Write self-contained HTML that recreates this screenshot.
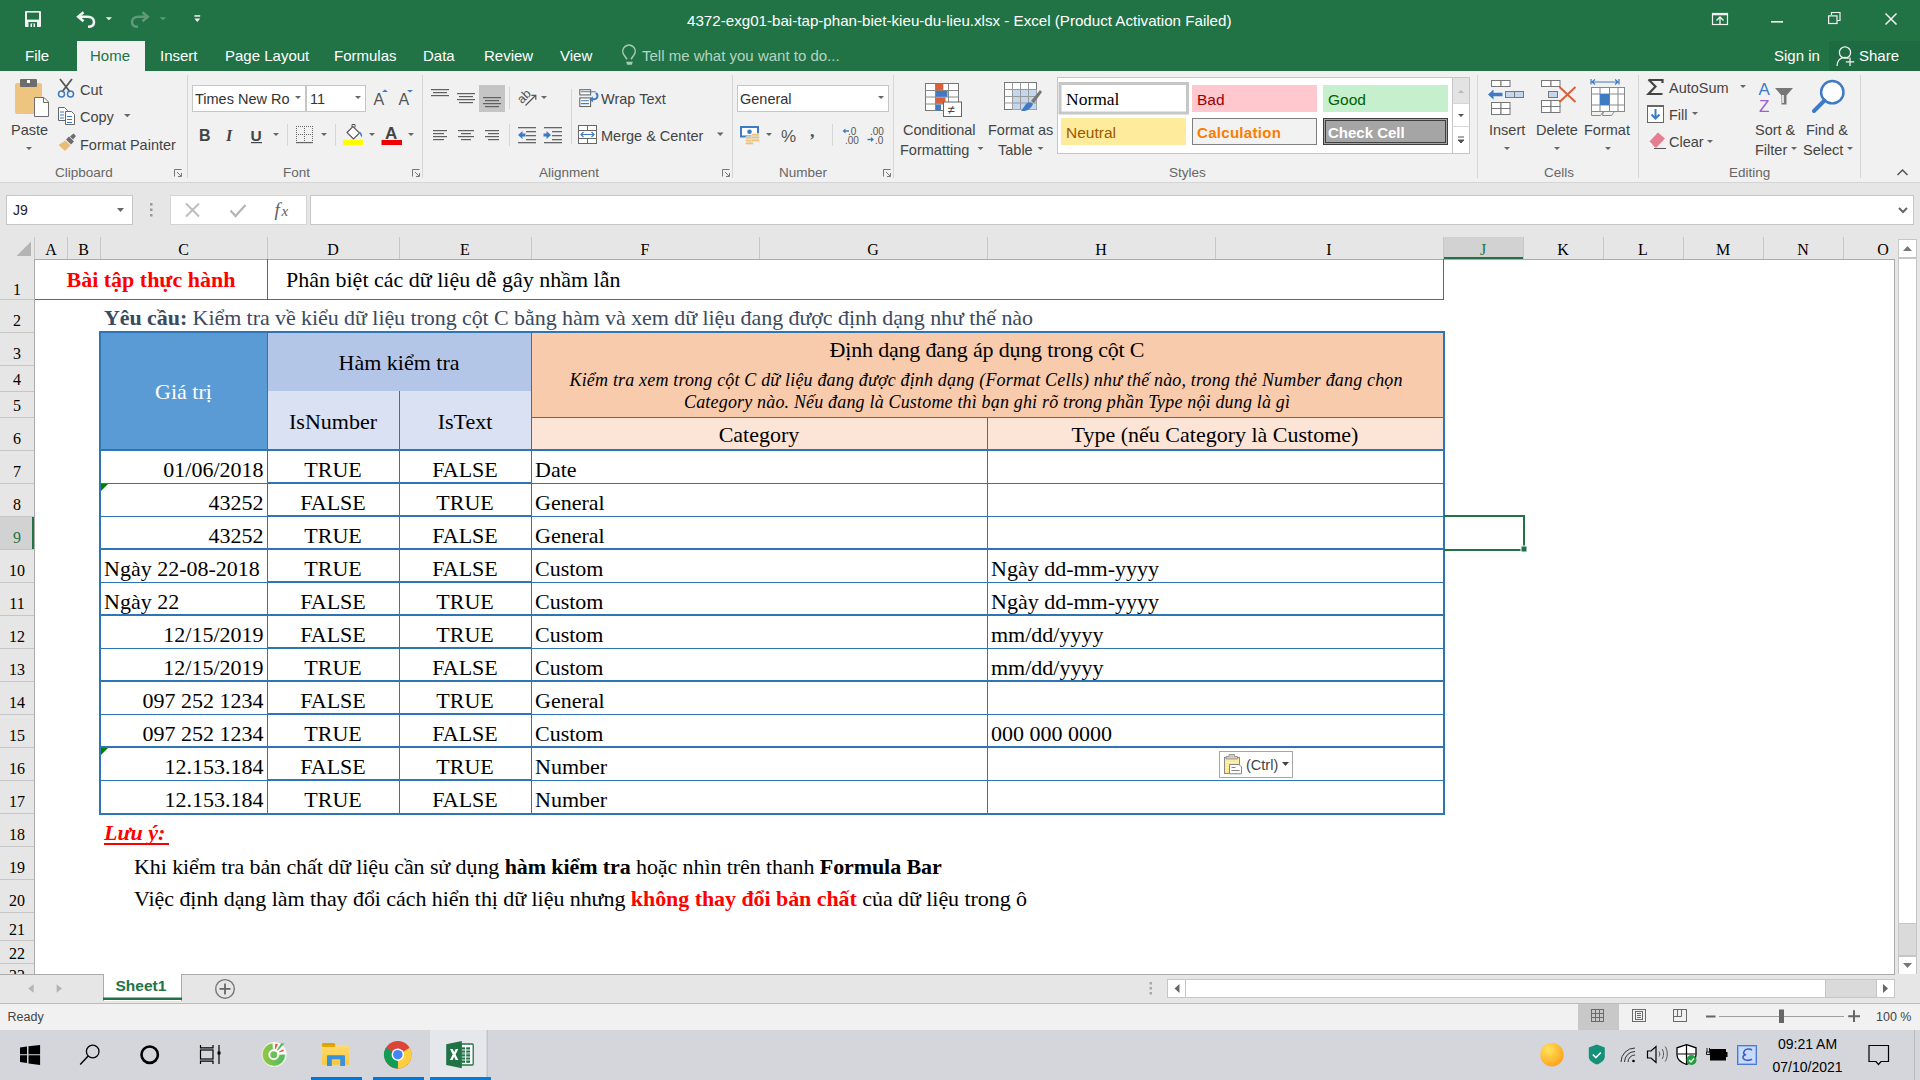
<!DOCTYPE html>
<html><head><meta charset="utf-8">
<style>
*{margin:0;padding:0;box-sizing:border-box}
html,body{width:1920px;height:1080px;overflow:hidden}
body{position:relative;background:#fff;font-family:"Liberation Sans",sans-serif;color:#000}
.a{position:absolute}
.t{position:absolute;white-space:nowrap}
.ui{font-family:"Liberation Sans",sans-serif;font-size:15px;color:#444}
.sf{font-family:"Liberation Serif",serif}
/* title */
#title{left:0;top:0;width:1920px;height:71px;background:#217346}
.tab{position:absolute;top:47px;font-size:15px;color:#fff;white-space:nowrap}
#ribbon{left:0;top:71px;width:1920px;height:112px;background:#F1F1F1;border-bottom:1px solid #D5D5D5}
.sep{position:absolute;width:1px;background:#D6D6D6}
.rl{font-size:14.5px;color:#444;margin-top:1px}
.gl{font-size:15.5px}
.glabel{position:absolute;top:164.5px;font-size:13.5px;color:#666;white-space:nowrap}
#fbar{left:0;top:183px;width:1920px;height:54px;background:#E6E6E6}
#colh{left:0;top:237px;width:1895px;height:22px;background:#E6E6E6;border-bottom:1px solid #ABABAB}
.ch{position:absolute;top:237px;height:22px;border-left:1px solid #C6C6C6;font-family:"Liberation Serif",serif;font-size:18px;text-align:center;line-height:24px;color:#000}
.rh{position:absolute;left:0;width:34px;background:#E6E6E6;border-bottom:1px solid #C6C6C6;font-family:"Liberation Serif",serif;font-size:18px;text-align:center;color:#000}
.cell{position:absolute;font-family:"Liberation Serif",serif;font-size:22px;white-space:nowrap;color:#000}
</style></head><body>

<!-- ============ TITLE BAR ============ -->
<div class="a" id="title"></div>
<div class="a" style="left:77px;top:41px;width:68px;height:30px;background:#F1F1F1"></div>
<div class="a" style="left:1829px;top:41px;width:91px;height:30px;background:#1E6B41"></div>

<svg class="a" style="left:0;top:0" width="1920" height="71" viewBox="0 0 1920 71">
<!-- save -->
<rect x="25" y="11" width="16" height="16" rx="1" fill="#F3F3F3"/>
<rect x="27" y="12.6" width="12" height="7" fill="#217346"/>
<rect x="28.5" y="22" width="8.5" height="5" fill="#217346"/>
<rect x="30.5" y="23.5" width="4.5" height="3.5" fill="#F3F3F3"/>
<rect x="32" y="23.5" width="1.5" height="3.5" fill="#217346"/>
<!-- undo -->
<path d="M79.5 16.7H87.5C91.8 16.7 94 19.2 94 22C94 24.8 92 26.8 88 26.8" fill="none" stroke="#F3F3F3" stroke-width="2.6"/>
<path d="M83.5 12.2L78.2 16.7L83.5 21.3" fill="none" stroke="#F3F3F3" stroke-width="2.6"/>
<path d="M105.8 17.3h6.2l-3.1 3z" fill="#F3F3F3"/>
<!-- redo faded -->
<path d="M146.5 16.7H138.5C134.2 16.7 132 19.2 132 22C132 24.8 134 26.8 138 26.8" fill="none" stroke="#5E9A77" stroke-width="2.6"/>
<path d="M142.5 12.2L147.8 16.7L142.5 21.3" fill="none" stroke="#5E9A77" stroke-width="2.6"/>
<path d="M159.8 17.3h6.2l-3.1 3z" fill="#5E9A77"/>
<!-- customize -->
<rect x="194.4" y="15.2" width="5.8" height="1.5" fill="#F3F3F3"/>
<path d="M194.4 18.5h5.8l-2.9 3.5z" fill="#F3F3F3"/>
<!-- lightbulb -->
<path d="M627 59.3l-3.2-4.6a6.2 6.2 0 1 1 10.4 0l-3.2 4.6" fill="none" stroke="#A8CBB5" stroke-width="1.5"/>
<path d="M626.2 61.8h6.6l-.9 3h-4.8z" fill="#A8CBB5"/>
<!-- ribbon display options -->
<rect x="1712.5" y="13.5" width="15" height="11" fill="none" stroke="#F3F3F3" stroke-width="1.2"/>
<rect x="1712.5" y="13.5" width="15" height="1.8" fill="#F3F3F3"/>
<path d="M1720 17v7.5M1716.5 20.5l3.5-3.5l3.5 3.5" fill="none" stroke="#F3F3F3" stroke-width="1.3"/>
<!-- minimize -->
<rect x="1771" y="21" width="12" height="1.6" fill="#F3F3F3"/>
<!-- restore -->
<path d="M1831.5 15v-2.5h8.5v8h-2.8" fill="none" stroke="#F3F3F3" stroke-width="1.2"/>
<rect x="1828.6" y="15.9" width="8.4" height="7.6" fill="none" stroke="#F3F3F3" stroke-width="1.2"/>
<!-- close -->
<path d="M1885.5 13.5l11 11M1896.5 13.5l-11 11" stroke="#F3F3F3" stroke-width="1.5"/>
<!-- share person -->
<circle cx="1845" cy="52.5" r="5.6" fill="none" stroke="#F3F3F3" stroke-width="1.3"/>
<path d="M1837 66c0-5 3-8.5 7.5-8.5c1.5 0 3 .3 4.2 1" fill="none" stroke="#F3F3F3" stroke-width="1.3"/>
<path d="M1850 57.5v8.5M1845.8 61.8h8.4" stroke="#F3F3F3" stroke-width="1.3"/>
</svg>
<div class="t" style="left:687px;top:12px;font-size:15.15px;color:#fff">4372-exg01-bai-tap-phan-biet-kieu-du-lieu.xlsx - Excel (Product Activation Failed)</div>

<div class="tab" style="left:25px">File</div>
<div class="tab" style="left:90px;color:#217346">Home</div>
<div class="tab" style="left:160px">Insert</div>
<div class="tab" style="left:225px">Page Layout</div>
<div class="tab" style="left:334px">Formulas</div>
<div class="tab" style="left:423px">Data</div>
<div class="tab" style="left:484px">Review</div>
<div class="tab" style="left:560px">View</div>
<div class="tab" style="left:642px;color:#B5D3C0">Tell me what you want to do...</div>
<div class="tab" style="left:1774px">Sign in</div>
<div class="tab" style="left:1859px">Share</div>

<!-- ============ RIBBON ============ -->

<div class="a" id="ribbon"></div>
<svg class="a" style="left:0;top:71px" width="1920" height="111" viewBox="0 71 1920 111">
<!-- separators -->
<g fill="#D6D6D6">
<rect x="187" y="75" width="1" height="103"/><rect x="422" y="75" width="1" height="103"/>
<rect x="732" y="75" width="1" height="103"/><rect x="893" y="75" width="1" height="103"/>
<rect x="1477" y="75" width="1" height="103"/><rect x="1638" y="75" width="1" height="103"/>
<rect x="1860" y="75" width="1" height="103"/>
<rect x="287" y="124" width="1" height="22"/><rect x="335" y="124" width="1" height="22"/>
<rect x="509" y="87" width="1" height="22"/><rect x="509" y="124" width="1" height="22"/>
<rect x="571" y="89" width="1" height="55"/><rect x="832" y="124" width="1" height="22"/>
</g>
<!-- dialog launchers -->
<g fill="none" stroke="#777" stroke-width="1">
<path d="M174.5 176.5v-7h7M177 172l4 4M178 176.5h3.5v-3.5"/>
<path d="M412.5 176.5v-7h7M415 172l4 4M416 176.5h3.5v-3.5"/>
<path d="M722.5 176.5v-7h7M725 172l4 4M726 176.5h3.5v-3.5"/>
<path d="M883.5 176.5v-7h7M886 172l4 4M887 176.5h3.5v-3.5"/>
</g>
<!-- dropdown arrows -->
<g fill="#666">
<path d="M26 147h6l-3 3z"/><path d="M124 114h6.5l-3.25 3.25z"/>
<path d="M295 96h6l-3 3z"/><path d="M355 96h6l-3 3z"/>
<path d="M273 133h6l-3 3z"/><path d="M321 133h6l-3 3z"/><path d="M369 133h6l-3 3z"/><path d="M408 133h6l-3 3z"/>
<path d="M541 96h6l-3 3z"/><path d="M717 132.5h6.5l-3.25 3.5z"/>
<path d="M878 96h6l-3 3z"/><path d="M766 133h6l-3 3z"/>
<path d="M977.5 147h6l-3 3z"/><path d="M1037.5 147h6l-3 3z"/>
<path d="M1504 147h6l-3 3z"/><path d="M1554 147h6l-3 3z"/><path d="M1605 147h6l-3 3z"/>
<path d="M1740 85h6l-3 3z"/><path d="M1692 112h6l-3 3z"/><path d="M1707 140h6l-3 3z"/>
<path d="M1791 147h6l-3 3z"/><path d="M1847 147h6l-3 3z"/>
</g>
<!-- Paste -->
<rect x="15" y="83" width="27" height="31" rx="2" fill="#EDC57F"/>
<rect x="20" y="79" width="17" height="8" rx="1" fill="#6D6D6D"/>
<rect x="27" y="80" width="3" height="3" fill="#fff"/>
<path d="M34.5 97.5h9.5l4.5 4.5v14.5h-14z" fill="#fff" stroke="#6D6D6D"/>
<path d="M43.5 97.5v5h5" fill="none" stroke="#6D6D6D"/>
<!-- Cut -->
<path d="M60 79L70 92M72 79L62 92" stroke="#555" stroke-width="1.8"/>
<circle cx="61.5" cy="94" r="3" fill="none" stroke="#3E7BC4" stroke-width="1.5"/>
<circle cx="70.5" cy="94" r="3" fill="none" stroke="#3E7BC4" stroke-width="1.5"/>
<!-- Copy -->
<path d="M58.5 107.5h6l3 3v10h-9z" fill="#fff" stroke="#666"/>
<path d="M65.5 111.5h6l3 3v10h-9z" fill="#fff" stroke="#666"/>
<path d="M60 112h4M60 115h4M60 118h4M67 116.5h5M67 119.5h5M67 122.5h5" stroke="#3E7BC4"/>
<!-- Format painter -->
<path d="M58.5 145l6.5 6l5.5-5.5l-5-5z" fill="#E8BD7A"/>
<path d="M66 139.5l5 5l3-3l-5-5z" fill="#6D6D6D"/>
<path d="M70 136.5l3.5-3l2.5 2.5l-3 3.5z" fill="#6D6D6D"/>
<!-- Font boxes -->
<rect x="192.5" y="85.5" width="113" height="26" fill="#fff" stroke="#C6C6C6"/>
<rect x="306.5" y="85.5" width="59" height="26" fill="#fff" stroke="#C6C6C6"/>
<!-- grow / shrink font -->
<text x="373.5" y="104.5" font-family="Liberation Sans" font-size="16" fill="#555">A</text>
<path d="M382 92h6l-3-2.5z" fill="#3E7BC4"/>
<text x="398.5" y="104.5" font-family="Liberation Sans" font-size="16" fill="#555">A</text>
<path d="M407 90h6l-3 2.5z" fill="#3E7BC4"/>
<!-- B I U -->
<text x="199" y="140.5" font-family="Liberation Sans" font-weight="bold" font-size="16" fill="#444">B</text>
<text x="226" y="140.5" font-family="Liberation Serif" font-style="italic" font-weight="bold" font-size="16" fill="#444">I</text>
<text x="250.5" y="140.5" font-family="Liberation Sans" font-weight="bold" font-size="15.5" fill="#444">U</text>
<rect x="251" y="142" width="11" height="1.2" fill="#444"/>
<!-- borders -->
<path d="M296.5 126v16M304.5 126v16M312.5 126v16M296 126.5h17M296 134.5h17" stroke="#6A6A6A" stroke-dasharray="1 1" fill="none"/>
<rect x="296" y="142" width="17" height="1.2" fill="#666"/>
<!-- fill color -->
<path d="M347 132.5l6-6l6.5 6.5l-6 6z" fill="#fff" stroke="#555" stroke-width="1.1"/>
<path d="M352 127v-2.5h3v3" fill="none" stroke="#555" stroke-width="1"/>
<path d="M359.5 131.5c2 1 3 3 2.5 6l-1.5-2z" fill="#3E7BC4"/>
<rect x="343" y="140" width="20" height="5" fill="#FFFF00"/>
<!-- font color -->
<text x="385" y="138.6" font-family="Liberation Sans" font-weight="bold" font-size="17" fill="#444">A</text>
<rect x="381.5" y="140" width="20.5" height="5" fill="#F00000"/>
<!-- alignment icons -->
<g fill="#606060">
<rect x="431" y="89" width="18" height="1.2"/><rect x="433" y="92" width="14" height="1.2"/><rect x="431" y="95" width="18" height="1.2"/>
<rect x="457" y="93" width="18" height="1.2"/><rect x="459" y="96" width="14" height="1.2"/><rect x="457" y="99" width="18" height="1.2"/><rect x="459" y="102" width="14" height="1.2"/>
</g>
<rect x="479" y="85" width="26" height="27" fill="#C5C5C5"/>
<g fill="#606060">
<rect x="483" y="97" width="18" height="1.2"/><rect x="485" y="100" width="14" height="1.2"/><rect x="483" y="103" width="18" height="1.2"/><rect x="485" y="106" width="14" height="1.2"/>
<rect x="433" y="130" width="14" height="1.2"/><rect x="433" y="133" width="11" height="1.2"/><rect x="433" y="136" width="14" height="1.2"/><rect x="433" y="139" width="11" height="1.2"/>
<rect x="458" y="130" width="16" height="1.2"/><rect x="461" y="133" width="10" height="1.2"/><rect x="458" y="136" width="16" height="1.2"/><rect x="461" y="139" width="10" height="1.2"/>
<rect x="485" y="130" width="14" height="1.2"/><rect x="488" y="133" width="11" height="1.2"/><rect x="485" y="136" width="14" height="1.2"/><rect x="488" y="139" width="11" height="1.2"/>
</g>
<!-- orientation -->
<text x="516.5" y="101" font-family="Liberation Sans" font-size="12.5" fill="#555" transform="rotate(-45 523 96)">ab</text>
<path d="M525.5 105.5L535.5 95.5M531.3 95.3h4.5v4.5" stroke="#555" stroke-width="1.2" fill="none"/>
<!-- indent -->
<g fill="#666">
<rect x="518" y="127" width="18" height="1.3"/><rect x="526" y="131" width="10" height="1.3"/><rect x="526" y="135" width="10" height="1.3"/><rect x="526" y="139" width="10" height="1.3"/><rect x="518" y="142" width="18" height="1.3"/>
<rect x="544" y="127" width="18" height="1.3"/><rect x="552" y="131" width="10" height="1.3"/><rect x="552" y="135" width="10" height="1.3"/><rect x="552" y="139" width="10" height="1.3"/><rect x="544" y="142" width="18" height="1.3"/>
</g>
<path d="M518 135l4.5-4v2.5h3v3h-3v2.5z" fill="#3E7BC4"/>
<path d="M551 135l-4.5-4v2.5h-3v3h3v2.5z" fill="#3E7BC4"/>
<!-- wrap text icon -->
<rect x="579.8" y="89.7" width="10.8" height="5.2" fill="#fff" stroke="#666" stroke-width="1.1"/>
<rect x="579.8" y="97.9" width="10.8" height="8.6" fill="#fff" stroke="#666" stroke-width="1.1"/>
<path d="M581 91.8h14.5M581 100.8h8M581 103.6h8" stroke="#3E7BC4" stroke-width="1.1"/>
<path d="M595.5 93.2c2.8 .3 2.8 5.8 -1.2 6h-2.5" fill="none" stroke="#3E7BC4" stroke-width="2"/>
<path d="M589.3 99.2l3.6-3v6z" fill="#3E7BC4"/>
<!-- merge icon -->
<rect x="578.5" y="125.5" width="18" height="18" fill="#fff" stroke="#666"/>
<path d="M578.5 130.5h18M578.5 138.5h18M587.5 125.5v5M587.5 138.5v5" stroke="#666"/>
<path d="M581 134.5h13M583.5 132l-2.5 2.5l2.5 2.5M591.5 132l2.5 2.5l-2.5 2.5" stroke="#3E7BC4" stroke-width="1.2" fill="none"/>
<!-- Number format box -->
<rect x="737.5" y="85.5" width="151" height="26" fill="#fff" stroke="#C6C6C6"/>
<!-- accounting -->
<rect x="740" y="126" width="19" height="11.5" fill="#3E7BC4"/>
<rect x="742" y="128" width="15" height="7.5" fill="#fff"/>
<circle cx="749.5" cy="131.8" r="2.3" fill="#3E7BC4"/>
<g fill="#EBC27C" stroke="#F1F1F1" stroke-width=".6"><rect x="745.5" y="136.5" width="8" height="2.6" rx="1.2"/><rect x="745.5" y="139.3" width="8" height="2.6" rx="1.2"/><rect x="745.5" y="142.1" width="8" height="2.6" rx="1.2"/>
<rect x="751.5" y="133.5" width="8" height="2.6" rx="1.2"/><rect x="751.5" y="136.3" width="8" height="2.6" rx="1.2"/><rect x="751.5" y="139.1" width="8" height="2.6" rx="1.2"/></g>
<text x="781" y="142" font-family="Liberation Sans" font-size="17" fill="#555">%</text>
<text x="810" y="137" font-family="Liberation Serif" font-weight="bold" font-size="18" fill="#555">,</text>
<!-- increase/decrease decimal -->
<text x="848" y="135" font-family="Liberation Sans" font-size="10" fill="#555">.0</text>
<text x="845" y="143.5" font-family="Liberation Sans" font-size="10" fill="#555">.00</text>
<path d="M842.5 131l3-2.5v1.8h3.5v1.5h-3.5v1.8z" fill="#3E7BC4"/>
<text x="870" y="135" font-family="Liberation Sans" font-size="10" fill="#555">.00</text>
<text x="875" y="143.5" font-family="Liberation Sans" font-size="10" fill="#555">.0</text>
<path d="M874 139.5l-3-2.5v1.8h-3.5v1.5h3.5v1.8z" fill="#3E7BC4"/>
<!-- conditional formatting -->
<rect x="925.5" y="83.5" width="33" height="27" fill="#fff" stroke="#777"/>
<path d="M925.5 90.5h33M925.5 97h33M925.5 104h33M935.5 83.5v27M948.5 83.5v27" stroke="#888" fill="none"/>
<rect x="936" y="84" width="7.3" height="6.3" fill="#D9603B"/><rect x="936" y="91" width="11.5" height="5.8" fill="#3E7BC4"/>
<rect x="936" y="97.5" width="9.5" height="6.3" fill="#D9603B"/><rect x="936" y="104.5" width="5" height="5.8" fill="#3E7BC4"/>
<rect x="943.5" y="102" width="18" height="14.5" fill="#fff" stroke="#666"/>
<text x="947.5" y="114" font-family="Liberation Sans" font-size="13" fill="#444">≠</text>
<!-- format as table -->
<rect x="1004.5" y="82.5" width="32" height="27" fill="#fff" stroke="#777"/>
<rect x="1012" y="89.5" width="24.5" height="20" fill="#C5D7EC"/>
<path d="M1004.5 89.5h32M1004.5 96.5h32M1004.5 103h32M1012.5 82.5v27M1020.5 82.5v27M1028.5 82.5v27" stroke="#999" fill="none"/>
<path d="M1031 101l9-11l2 2l-8 11z" fill="#777"/>
<path d="M1026 104c2-2 5-2 7 0c-1 3-4 6-8 7h-4c2-2 3-5 5-7z" fill="#3E7BC4"/>
<!-- styles gallery -->
<rect x="1057.5" y="77.5" width="412" height="76" fill="#fff" stroke="#C6C6C6"/>
<rect x="1452.5" y="77.5" width="17" height="76" fill="#fff" stroke="#C6C6C6"/>
<rect x="1453" y="78" width="16" height="25" fill="#E3E3E3"/>
<path d="M1452.5 103.5h17M1452.5 126.5h17" stroke="#D6D6D6"/>
<path d="M1458 93h6l-3-3z" fill="#B8B8B8"/>
<path d="M1458 114h6l-3 3z" fill="#555"/>
<path d="M1458 137h6M1458 140h6l-3 3z" stroke="#555" fill="#555" stroke-width="1"/>
<rect x="1060" y="83.5" width="127.5" height="29.5" fill="#fff" stroke="#C6C6C6" stroke-width="3"/>
<rect x="1192" y="85" width="125" height="27" fill="#FFC7CE"/>
<rect x="1323" y="85" width="125" height="27" fill="#C6EFCE"/>
<rect x="1061" y="118" width="125" height="27" fill="#FFEB9C"/>
<rect x="1192.5" y="118.5" width="124" height="26" fill="#F2F2F2" stroke="#7F7F7F"/>
<rect x="1323.5" y="118.5" width="124" height="26" fill="#A5A5A5" stroke="#3F3F3F" stroke-width="1"/>
<rect x="1325.5" y="120.5" width="120" height="22" fill="none" stroke="#3F3F3F" stroke-width="1"/>
<!-- insert cells -->
<g fill="#fff" stroke="#777">
<rect x="1491.5" y="80.5" width="9.5" height="6"/><rect x="1501" y="80.5" width="9" height="6"/>
<rect x="1491.5" y="102.5" width="9.5" height="6"/><rect x="1501" y="102.5" width="9" height="6"/>
<rect x="1491.5" y="108.5" width="9.5" height="6"/><rect x="1501" y="108.5" width="9" height="6"/>
<rect x="1541.5" y="80.5" width="9.5" height="6"/><rect x="1551" y="80.5" width="9" height="6"/>
<rect x="1541.5" y="100.5" width="9.5" height="6"/><rect x="1551" y="100.5" width="9" height="6"/>
<rect x="1541.5" y="106.5" width="9.5" height="6"/><rect x="1551" y="106.5" width="9" height="6"/>
</g>
<g fill="#C5D7EC" stroke="#777">
<rect x="1505.5" y="91.5" width="9" height="6"/><rect x="1514.5" y="91.5" width="9" height="6"/>
<rect x="1548.5" y="91.5" width="9" height="6"/>
</g>
<path d="M1488 94.5l5.5-5v3.2h9v3.6h-9v3.2z" fill="#3E7BC4"/>
<path d="M1559.5 87l16 15M1575.5 87l-16 15" stroke="#D9603B" stroke-width="2"/>
<!-- format cells -->
<path d="M1591 79v5.5M1619 79v5.5M1592 82h26M1595 79.5l-3 2.5l3 2.5M1615 79.5l3 2.5l-3 2.5" stroke="#3E7BC4" stroke-width="1.2" fill="none"/>
<rect x="1591.5" y="87.5" width="33" height="24" fill="#fff" stroke="#888"/>
<path d="M1591.5 94h33M1591.5 105h33M1600 87.5v24M1609.5 87.5v24M1618 87.5v24" stroke="#888" fill="none"/>
<rect x="1600" y="94" width="9.5" height="11" fill="#3E7BC4"/>
<path d="M1591.5 111.5v4h9l3-4M1603.5 111.5l-1 4h9l3-4" stroke="#888" fill="none"/>
<!-- autosum -->
<path d="M1648.5 80h14v3M1662.5 94h-14l7-7.5l-7-7" stroke="#444" stroke-width="2.2" fill="none" stroke-linejoin="miter"/>
<!-- fill -->
<rect x="1647.5" y="105.5" width="16" height="17" fill="#fff" stroke="#666"/>
<rect x="1647" y="105" width="17" height="2" fill="#666"/>
<path d="M1655.5 109v9M1651.5 114.5l4 4l4-4" stroke="#3E7BC4" stroke-width="2" fill="none"/>
<!-- clear -->
<path d="M1649 142l9-9.5l7 6l-9 9.5z" fill="#E57E91"/>
<path d="M1649 142l3 3" stroke="#fff" stroke-width="1.5"/>
<rect x="1654" y="148" width="12" height="1" fill="#555"/>
<!-- sort -->
<text x="1758.5" y="94.7" font-family="Liberation Sans" font-size="17" fill="#3E7BC4">A</text>
<text x="1759" y="112" font-family="Liberation Sans" font-size="17" fill="#9E5FC9">Z</text>
<path d="M1775 88h18l-6.5 7.5v9h-5v-9z" fill="#777"/>
<path d="M1783 95v8" stroke="#fff" stroke-width="1.5"/>
<!-- find -->
<circle cx="1832.3" cy="92.2" r="11.2" fill="#fff" stroke="#3E7BC4" stroke-width="2.4"/>
<path d="M1824.5 100.5l-10.5 10.5" stroke="#3E7BC4" stroke-width="4" stroke-linecap="round"/>
<g fill="#666"><path d="M295 96h6l-3 3z"/><path d="M355 96h6l-3 3z"/><path d="M878 96h6l-3 3z"/></g>
<!-- collapse chevron -->
<path d="M1897.5 175l5-5l5 5" stroke="#555" stroke-width="1.5" fill="none"/>
</svg>
<div class="t rl" style="left:11px;top:121px">Paste</div>
<div class="t rl" style="left:80px;top:81px">Cut</div>
<div class="t rl" style="left:80px;top:108px">Copy</div>
<div class="t rl" style="left:80px;top:136px">Format Painter</div>
<div class="t rl" style="left:195px;top:90px;color:#333">Times New Ro</div>
<div class="t rl" style="left:310px;top:90px;color:#333">11</div>
<div class="t rl" style="left:601px;top:90px">Wrap Text</div>
<div class="t rl" style="left:601px;top:127px">Merge &amp; Center</div>
<div class="t rl" style="left:740px;top:90px;color:#333">General</div>
<div class="t rl" style="left:903px;top:121px">Conditional</div>
<div class="t rl" style="left:900px;top:141px">Formatting</div>
<div class="t rl" style="left:988px;top:121px">Format as</div>
<div class="t rl" style="left:998px;top:141px">Table</div>
<div class="t" style="left:1066px;top:88.5px;font-family:'Liberation Serif',serif;font-size:17.5px;color:#000">Normal</div>
<div class="t gl" style="left:1197px;top:91px;color:#9C0006">Bad</div>
<div class="t gl" style="left:1328px;top:91px;color:#006100">Good</div>
<div class="t gl" style="left:1066px;top:123.5px;color:#9C5700">Neutral</div>
<div class="t gl" style="left:1197px;top:123.5px;color:#FA7D00;font-weight:bold;font-size:15px;letter-spacing:0.3px">Calculation</div>
<div class="t gl" style="left:1328px;top:123.5px;color:#fff;font-weight:bold;font-size:15px">Check Cell</div>
<div class="t rl" style="left:1489px;top:121px">Insert</div>
<div class="t rl" style="left:1536px;top:121px">Delete</div>
<div class="t rl" style="left:1584px;top:121px">Format</div>
<div class="t rl" style="left:1669px;top:79px">AutoSum</div>
<div class="t rl" style="left:1669px;top:106px">Fill</div>
<div class="t rl" style="left:1669px;top:133px">Clear</div>
<div class="t rl" style="left:1755px;top:121px">Sort &amp;</div>
<div class="t rl" style="left:1755px;top:141px">Filter</div>
<div class="t rl" style="left:1806px;top:121px">Find &amp;</div>
<div class="t rl" style="left:1803px;top:141px">Select</div>
<div class="glabel" style="left:55px">Clipboard</div>
<div class="glabel" style="left:283px">Font</div>
<div class="glabel" style="left:539px">Alignment</div>
<div class="glabel" style="left:779px">Number</div>
<div class="glabel" style="left:1169px">Styles</div>
<div class="glabel" style="left:1544px">Cells</div>
<div class="glabel" style="left:1729px">Editing</div>


<!-- ============ FORMULA BAR ============ -->

<div class="a" id="fbar"></div>
<div class="a" style="left:6px;top:195px;width:127px;height:30px;background:#fff;border:1px solid #C6C6C6"></div>
<div class="t" style="left:13px;top:202px;font-size:14px;color:#222">J9</div>
<div class="a" style="left:170px;top:195px;width:137px;height:30px;background:#fff;border:1px solid #D4D4D4"></div>
<div class="a" style="left:310px;top:195px;width:1604px;height:30px;background:#fff;border:1px solid #C6C6C6"></div>
<svg class="a" style="left:0;top:182px" width="1920" height="55" viewBox="0 182 1920 55">
<path d="M117 208h7l-3.5 4z" fill="#666"/>
<rect x="150" y="203" width="2.5" height="2.5" fill="#999"/><rect x="150" y="208.5" width="2.5" height="2.5" fill="#999"/><rect x="150" y="214" width="2.5" height="2.5" fill="#999"/>
<path d="M186 203.5l13 13M199 203.5l-13 13" stroke="#BDBDBD" stroke-width="2"/>
<path d="M230.5 210.5l5 5.5l10-11" stroke="#B5B5B5" stroke-width="2.2" fill="none"/>
<text x="274.5" y="215.5" font-family="Liberation Serif" font-style="italic" font-size="19" fill="#606060">f</text>
<text x="281.5" y="215.5" font-family="Liberation Serif" font-style="italic" font-size="15" fill="#606060">x</text>
<path d="M1899 208l4 4l4-4" stroke="#666" stroke-width="2" fill="none"/>
</svg>
<!-- ============ COLUMN HEADERS ============ -->
<svg class="a" style="left:0;top:237px" width="1920" height="737" viewBox="0 237 1920 737">
<rect x="0" y="237" width="1895" height="22" fill="#E6E6E6"/>
<rect x="1443" y="237" width="80" height="22" fill="#D2D2D2"/>
<rect x="1443" y="257" width="80" height="2" fill="#217346"/>
<rect x="0" y="259" width="1895" height="1" fill="#ABABAB"/>
<path d="M31 241.5v14.5h-14.5z" fill="#B4B4B4"/>
<text x="51.0" y="255" text-anchor="middle" font-family="Liberation Serif" font-size="16" fill="#000">A</text>
<rect x="67" y="237" width="1" height="22" fill="#C6C6C6"/>
<text x="83.5" y="255" text-anchor="middle" font-family="Liberation Serif" font-size="16" fill="#000">B</text>
<rect x="100" y="237" width="1" height="22" fill="#C6C6C6"/>
<text x="183.5" y="255" text-anchor="middle" font-family="Liberation Serif" font-size="16" fill="#000">C</text>
<rect x="267" y="237" width="1" height="22" fill="#C6C6C6"/>
<text x="333.0" y="255" text-anchor="middle" font-family="Liberation Serif" font-size="16" fill="#000">D</text>
<rect x="399" y="237" width="1" height="22" fill="#C6C6C6"/>
<text x="465.0" y="255" text-anchor="middle" font-family="Liberation Serif" font-size="16" fill="#000">E</text>
<rect x="531" y="237" width="1" height="22" fill="#C6C6C6"/>
<text x="645.0" y="255" text-anchor="middle" font-family="Liberation Serif" font-size="16" fill="#000">F</text>
<rect x="759" y="237" width="1" height="22" fill="#C6C6C6"/>
<text x="873.0" y="255" text-anchor="middle" font-family="Liberation Serif" font-size="16" fill="#000">G</text>
<rect x="987" y="237" width="1" height="22" fill="#C6C6C6"/>
<text x="1101.0" y="255" text-anchor="middle" font-family="Liberation Serif" font-size="16" fill="#000">H</text>
<rect x="1215" y="237" width="1" height="22" fill="#C6C6C6"/>
<text x="1329.0" y="255" text-anchor="middle" font-family="Liberation Serif" font-size="16" fill="#000">I</text>
<rect x="1443" y="237" width="1" height="22" fill="#C6C6C6"/>
<text x="1483.0" y="255" text-anchor="middle" font-family="Liberation Serif" font-size="16" fill="#217346">J</text>
<rect x="1523" y="237" width="1" height="22" fill="#C6C6C6"/>
<text x="1563.0" y="255" text-anchor="middle" font-family="Liberation Serif" font-size="16" fill="#000">K</text>
<rect x="1603" y="237" width="1" height="22" fill="#C6C6C6"/>
<text x="1643.0" y="255" text-anchor="middle" font-family="Liberation Serif" font-size="16" fill="#000">L</text>
<rect x="1683" y="237" width="1" height="22" fill="#C6C6C6"/>
<text x="1723.0" y="255" text-anchor="middle" font-family="Liberation Serif" font-size="16" fill="#000">M</text>
<rect x="1763" y="237" width="1" height="22" fill="#C6C6C6"/>
<text x="1803.0" y="255" text-anchor="middle" font-family="Liberation Serif" font-size="16" fill="#000">N</text>
<rect x="1843" y="237" width="1" height="22" fill="#C6C6C6"/>
<text x="1883.0" y="255" text-anchor="middle" font-family="Liberation Serif" font-size="16" fill="#000">O</text>
<rect x="34" y="237" width="1" height="22" fill="#C6C6C6"/>
<rect x="0" y="259" width="34" height="715" fill="#E6E6E6"/>
<rect x="34" y="259" width="1" height="715" fill="#ABABAB"/>
<rect x="0" y="299" width="34" height="1" fill="#C6C6C6"/>
<text x="17" y="294.5" text-anchor="middle" font-family="Liberation Serif" font-size="16" fill="#000">1</text>
<rect x="0" y="332" width="34" height="1" fill="#C6C6C6"/>
<text x="17" y="326" text-anchor="middle" font-family="Liberation Serif" font-size="16" fill="#000">2</text>
<rect x="0" y="365" width="34" height="1" fill="#C6C6C6"/>
<text x="17" y="359" text-anchor="middle" font-family="Liberation Serif" font-size="16" fill="#000">3</text>
<rect x="0" y="391" width="34" height="1" fill="#C6C6C6"/>
<text x="17" y="385" text-anchor="middle" font-family="Liberation Serif" font-size="16" fill="#000">4</text>
<rect x="0" y="417" width="34" height="1" fill="#C6C6C6"/>
<text x="17" y="411" text-anchor="middle" font-family="Liberation Serif" font-size="16" fill="#000">5</text>
<rect x="0" y="450" width="34" height="1" fill="#C6C6C6"/>
<text x="17" y="444" text-anchor="middle" font-family="Liberation Serif" font-size="16" fill="#000">6</text>
<rect x="0" y="483" width="34" height="1" fill="#C6C6C6"/>
<text x="17" y="477" text-anchor="middle" font-family="Liberation Serif" font-size="16" fill="#000">7</text>
<rect x="0" y="516" width="34" height="1" fill="#C6C6C6"/>
<text x="17" y="510" text-anchor="middle" font-family="Liberation Serif" font-size="16" fill="#000">8</text>
<rect x="0" y="517" width="34" height="33" fill="#D2D2D2"/>
<rect x="32" y="517" width="2" height="33" fill="#217346"/>
<rect x="0" y="549" width="34" height="1" fill="#C6C6C6"/>
<text x="17" y="543" text-anchor="middle" font-family="Liberation Serif" font-size="16" fill="#217346">9</text>
<rect x="0" y="582" width="34" height="1" fill="#C6C6C6"/>
<text x="17" y="576" text-anchor="middle" font-family="Liberation Serif" font-size="16" fill="#000">10</text>
<rect x="0" y="615" width="34" height="1" fill="#C6C6C6"/>
<text x="17" y="609" text-anchor="middle" font-family="Liberation Serif" font-size="16" fill="#000">11</text>
<rect x="0" y="648" width="34" height="1" fill="#C6C6C6"/>
<text x="17" y="642" text-anchor="middle" font-family="Liberation Serif" font-size="16" fill="#000">12</text>
<rect x="0" y="681" width="34" height="1" fill="#C6C6C6"/>
<text x="17" y="675" text-anchor="middle" font-family="Liberation Serif" font-size="16" fill="#000">13</text>
<rect x="0" y="714" width="34" height="1" fill="#C6C6C6"/>
<text x="17" y="708" text-anchor="middle" font-family="Liberation Serif" font-size="16" fill="#000">14</text>
<rect x="0" y="747" width="34" height="1" fill="#C6C6C6"/>
<text x="17" y="741" text-anchor="middle" font-family="Liberation Serif" font-size="16" fill="#000">15</text>
<rect x="0" y="780" width="34" height="1" fill="#C6C6C6"/>
<text x="17" y="774" text-anchor="middle" font-family="Liberation Serif" font-size="16" fill="#000">16</text>
<rect x="0" y="813" width="34" height="1" fill="#C6C6C6"/>
<text x="17" y="807" text-anchor="middle" font-family="Liberation Serif" font-size="16" fill="#000">17</text>
<rect x="0" y="846" width="34" height="1" fill="#C6C6C6"/>
<text x="17" y="840" text-anchor="middle" font-family="Liberation Serif" font-size="16" fill="#000">18</text>
<rect x="0" y="879" width="34" height="1" fill="#C6C6C6"/>
<text x="17" y="873" text-anchor="middle" font-family="Liberation Serif" font-size="16" fill="#000">19</text>
<rect x="0" y="912" width="34" height="1" fill="#C6C6C6"/>
<text x="17" y="906" text-anchor="middle" font-family="Liberation Serif" font-size="16" fill="#000">20</text>
<rect x="0" y="940" width="34" height="1" fill="#C6C6C6"/>
<text x="17" y="934.8" text-anchor="middle" font-family="Liberation Serif" font-size="16" fill="#000">21</text>
<rect x="0" y="963" width="34" height="1" fill="#C6C6C6"/>
<text x="17" y="958.9" text-anchor="middle" font-family="Liberation Serif" font-size="16" fill="#000">22</text>
<rect x="0" y="986" width="34" height="1" fill="#C6C6C6"/>
<text x="17" y="981" text-anchor="middle" font-family="Liberation Serif" font-size="16" fill="#000">23</text>
<rect x="1894" y="259" width="1" height="716" fill="#ABABAB"/>
</svg>
<!-- ============ GRID ============ -->
<svg class="a" style="left:0;top:259px" width="1894" height="715" viewBox="0 259 1894 715">
<rect x="100" y="332" width="167" height="118" fill="#5B9BD5"/>
<rect x="267" y="332" width="264" height="59" fill="#B4C6E7"/>
<rect x="267" y="391" width="264" height="59" fill="#D9E1F2"/>
<rect x="531" y="332" width="912" height="85" fill="#F8CBAD"/>
<rect x="531" y="417" width="912" height="33" fill="#FCE4D6"/>
<rect x="35" y="299" width="1409" height="1" fill="#2E75B6"/>
<rect x="267" y="259" width="1" height="40" fill="#2E75B6"/>
<rect x="1443" y="259" width="1" height="41" fill="#2E75B6"/>
<rect x="267" y="332" width="1" height="482" fill="#2E75B6"/>
<rect x="399" y="391" width="1" height="423" fill="#2E75B6"/>
<rect x="531" y="332" width="1" height="482" fill="#2E75B6"/>
<rect x="987" y="417" width="1" height="397" fill="#2E75B6"/>
<rect x="531" y="417" width="912" height="1" fill="#2E75B6"/>
<rect x="100" y="483" width="167" height="1" fill="#2E75B6"/>
<rect x="267" y="482" width="264" height="2" fill="#2E75B6"/>
<rect x="531" y="483" width="912" height="1" fill="#2E75B6"/>
<rect x="100" y="516" width="167" height="1" fill="#2E75B6"/>
<rect x="267" y="515" width="264" height="2" fill="#2E75B6"/>
<rect x="531" y="516" width="912" height="1" fill="#2E75B6"/>
<rect x="100" y="548" width="167" height="2" fill="#2E75B6"/>
<rect x="267" y="548" width="264" height="2" fill="#2E75B6"/>
<rect x="531" y="548" width="912" height="2" fill="#2E75B6"/>
<rect x="100" y="582" width="167" height="1" fill="#2E75B6"/>
<rect x="267" y="581" width="264" height="2" fill="#2E75B6"/>
<rect x="531" y="582" width="912" height="1" fill="#2E75B6"/>
<rect x="100" y="614" width="167" height="2" fill="#2E75B6"/>
<rect x="267" y="614" width="264" height="2" fill="#2E75B6"/>
<rect x="531" y="614" width="912" height="2" fill="#2E75B6"/>
<rect x="100" y="648" width="167" height="1" fill="#2E75B6"/>
<rect x="267" y="647" width="264" height="2" fill="#2E75B6"/>
<rect x="531" y="648" width="912" height="1" fill="#2E75B6"/>
<rect x="100" y="680" width="167" height="2" fill="#2E75B6"/>
<rect x="267" y="680" width="264" height="2" fill="#2E75B6"/>
<rect x="531" y="680" width="912" height="2" fill="#2E75B6"/>
<rect x="100" y="714" width="167" height="1" fill="#2E75B6"/>
<rect x="267" y="713" width="264" height="2" fill="#2E75B6"/>
<rect x="531" y="714" width="912" height="1" fill="#2E75B6"/>
<rect x="100" y="746" width="167" height="2" fill="#2E75B6"/>
<rect x="267" y="746" width="264" height="2" fill="#2E75B6"/>
<rect x="531" y="746" width="912" height="2" fill="#2E75B6"/>
<rect x="100" y="780" width="167" height="1" fill="#2E75B6"/>
<rect x="267" y="779" width="264" height="2" fill="#2E75B6"/>
<rect x="531" y="780" width="912" height="1" fill="#2E75B6"/>
<rect x="100" y="449" width="1344" height="2" fill="#2E75B6"/>
<rect x="99" y="331" width="1346" height="2" fill="#2E75B6"/>
<rect x="99" y="331" width="2" height="484" fill="#2E75B6"/>
<rect x="1443" y="331" width="2" height="484" fill="#2E75B6"/>
<rect x="99" y="813" width="1346" height="2" fill="#2E75B6"/>
<text x="151" y="287" text-anchor="middle" font-family="Liberation Serif" font-size="22" font-weight="bold" fill="#FF0000">Bài tập thực hành</text>
<text x="286" y="287" text-anchor="start" font-family="Liberation Serif" font-size="22" >Phân biệt các dữ liệu dễ gây nhầm lẫn</text>
<text x="104" y="324.8" textLength="929" lengthAdjust="spacing" font-family="Liberation Serif" font-size="22" fill="#3B4A5E"><tspan font-weight="bold">Yêu cầu:</tspan> Kiểm tra về kiểu dữ liệu trong cột C bằng hàm và xem dữ liệu đang được định dạng như thế nào</text>
<text x="183.5" y="399" text-anchor="middle" font-family="Liberation Serif" font-size="22" fill="#fff">Giá trị</text>
<text x="399" y="370" text-anchor="middle" font-family="Liberation Serif" font-size="22" >Hàm kiểm tra</text>
<text x="333" y="429" text-anchor="middle" font-family="Liberation Serif" font-size="22" >IsNumber</text>
<text x="465" y="429" text-anchor="middle" font-family="Liberation Serif" font-size="22" >IsText</text>
<text x="829.5" y="356.7" textLength="315" lengthAdjust="spacing" font-family="Liberation Serif" font-size="22">Định dạng đang áp dụng trong cột C</text>
<text x="569.5" y="385.8" textLength="833" lengthAdjust="spacing" font-family="Liberation Serif" font-size="18" font-style="italic">Kiểm tra xem trong cột C dữ liệu đang được định dạng (Format Cells) như thế nào, trong thẻ Number đang chọn</text>
<text x="684" y="408.2" textLength="606" lengthAdjust="spacing" font-family="Liberation Serif" font-size="18" font-style="italic">Category nào. Nếu đang là Custome thì bạn ghi rõ trong phần Type nội dung là gì</text>
<text x="759" y="442" text-anchor="middle" font-family="Liberation Serif" font-size="22" >Category</text>
<text x="1215" y="442" text-anchor="middle" font-family="Liberation Serif" font-size="22" >Type (nếu Category là Custome)</text>
<text x="263.5" y="477" text-anchor="end" font-family="Liberation Serif" font-size="22" >01/06/2018</text>
<text x="333" y="477" text-anchor="middle" font-family="Liberation Serif" font-size="22" >TRUE</text>
<text x="465" y="477" text-anchor="middle" font-family="Liberation Serif" font-size="22" >FALSE</text>
<text x="535" y="477" text-anchor="start" font-family="Liberation Serif" font-size="22" >Date</text>
<text x="263.5" y="510" text-anchor="end" font-family="Liberation Serif" font-size="22" >43252</text>
<text x="333" y="510" text-anchor="middle" font-family="Liberation Serif" font-size="22" >FALSE</text>
<text x="465" y="510" text-anchor="middle" font-family="Liberation Serif" font-size="22" >TRUE</text>
<text x="535" y="510" text-anchor="start" font-family="Liberation Serif" font-size="22" >General</text>
<text x="263.5" y="543" text-anchor="end" font-family="Liberation Serif" font-size="22" >43252</text>
<text x="333" y="543" text-anchor="middle" font-family="Liberation Serif" font-size="22" >TRUE</text>
<text x="465" y="543" text-anchor="middle" font-family="Liberation Serif" font-size="22" >FALSE</text>
<text x="535" y="543" text-anchor="start" font-family="Liberation Serif" font-size="22" >General</text>
<text x="104" y="576" text-anchor="start" font-family="Liberation Serif" font-size="22" >Ngày 22-08-2018</text>
<text x="333" y="576" text-anchor="middle" font-family="Liberation Serif" font-size="22" >TRUE</text>
<text x="465" y="576" text-anchor="middle" font-family="Liberation Serif" font-size="22" >FALSE</text>
<text x="535" y="576" text-anchor="start" font-family="Liberation Serif" font-size="22" >Custom</text>
<text x="991" y="576" text-anchor="start" font-family="Liberation Serif" font-size="22" >Ngày dd-mm-yyyy</text>
<text x="104" y="609" text-anchor="start" font-family="Liberation Serif" font-size="22" >Ngày 22</text>
<text x="333" y="609" text-anchor="middle" font-family="Liberation Serif" font-size="22" >FALSE</text>
<text x="465" y="609" text-anchor="middle" font-family="Liberation Serif" font-size="22" >TRUE</text>
<text x="535" y="609" text-anchor="start" font-family="Liberation Serif" font-size="22" >Custom</text>
<text x="991" y="609" text-anchor="start" font-family="Liberation Serif" font-size="22" >Ngày dd-mm-yyyy</text>
<text x="263.5" y="642" text-anchor="end" font-family="Liberation Serif" font-size="22" >12/15/2019</text>
<text x="333" y="642" text-anchor="middle" font-family="Liberation Serif" font-size="22" >FALSE</text>
<text x="465" y="642" text-anchor="middle" font-family="Liberation Serif" font-size="22" >TRUE</text>
<text x="535" y="642" text-anchor="start" font-family="Liberation Serif" font-size="22" >Custom</text>
<text x="991" y="642" text-anchor="start" font-family="Liberation Serif" font-size="22" >mm/dd/yyyy</text>
<text x="263.5" y="675" text-anchor="end" font-family="Liberation Serif" font-size="22" >12/15/2019</text>
<text x="333" y="675" text-anchor="middle" font-family="Liberation Serif" font-size="22" >TRUE</text>
<text x="465" y="675" text-anchor="middle" font-family="Liberation Serif" font-size="22" >FALSE</text>
<text x="535" y="675" text-anchor="start" font-family="Liberation Serif" font-size="22" >Custom</text>
<text x="991" y="675" text-anchor="start" font-family="Liberation Serif" font-size="22" >mm/dd/yyyy</text>
<text x="263.5" y="708" text-anchor="end" font-family="Liberation Serif" font-size="22" >097 252 1234</text>
<text x="333" y="708" text-anchor="middle" font-family="Liberation Serif" font-size="22" >FALSE</text>
<text x="465" y="708" text-anchor="middle" font-family="Liberation Serif" font-size="22" >TRUE</text>
<text x="535" y="708" text-anchor="start" font-family="Liberation Serif" font-size="22" >General</text>
<text x="263.5" y="741" text-anchor="end" font-family="Liberation Serif" font-size="22" >097 252 1234</text>
<text x="333" y="741" text-anchor="middle" font-family="Liberation Serif" font-size="22" >TRUE</text>
<text x="465" y="741" text-anchor="middle" font-family="Liberation Serif" font-size="22" >FALSE</text>
<text x="535" y="741" text-anchor="start" font-family="Liberation Serif" font-size="22" >Custom</text>
<text x="991" y="741" text-anchor="start" font-family="Liberation Serif" font-size="22" >000 000 0000</text>
<text x="263.5" y="774" text-anchor="end" font-family="Liberation Serif" font-size="22" >12.153.184</text>
<text x="333" y="774" text-anchor="middle" font-family="Liberation Serif" font-size="22" >FALSE</text>
<text x="465" y="774" text-anchor="middle" font-family="Liberation Serif" font-size="22" >TRUE</text>
<text x="535" y="774" text-anchor="start" font-family="Liberation Serif" font-size="22" >Number</text>
<text x="263.5" y="807" text-anchor="end" font-family="Liberation Serif" font-size="22" >12.153.184</text>
<text x="333" y="807" text-anchor="middle" font-family="Liberation Serif" font-size="22" >TRUE</text>
<text x="465" y="807" text-anchor="middle" font-family="Liberation Serif" font-size="22" >FALSE</text>
<text x="535" y="807" text-anchor="start" font-family="Liberation Serif" font-size="22" >Number</text>
<path d="M101 484h7l-7 7z" fill="#008000"/>
<path d="M101 748h7l-7 7z" fill="#008000"/>
<text x="104" y="839.5" font-family="Liberation Serif" font-size="22" font-weight="bold" font-style="italic" fill="#FF0000">Lưu ý:</text>
<rect x="104" y="843" width="65" height="2" fill="#FF0000"/>
<text x="134" y="874" textLength="807.7" lengthAdjust="spacing" font-family="Liberation Serif" font-size="22">Khi kiểm tra bản chất dữ liệu cần sử dụng <tspan font-weight="bold">hàm kiểm tra</tspan> hoặc nhìn trên thanh <tspan font-weight="bold">Formula Bar</tspan></text>
<text x="134" y="906" textLength="893" lengthAdjust="spacing" font-family="Liberation Serif" font-size="22">Việc định dạng làm thay đổi cách hiển thị dữ liệu nhưng <tspan font-weight="bold" fill="#FF0000">không thay đổi bản chất</tspan> của dữ liệu trong ô</text>
<path d="M1444 516h80v34h-80" fill="none" stroke="#217346" stroke-width="2"/>
<rect x="1521" y="546" width="6" height="6" fill="#217346" stroke="#fff" stroke-width="1"/>
</svg>
<!-- ============ SHEET TABS / STATUS ============ -->
<svg class="a" style="left:0;top:974px" width="1920" height="106" viewBox="0 974 1920 106">
<rect x="0" y="974" width="1920" height="30" fill="#E6E6E6"/>
<rect x="0" y="974" width="1895" height="1" fill="#ABABAB"/>
<rect x="0" y="1003" width="1920" height="1" fill="#BCBCBC"/>
<!-- vertical scrollbar bottom segment handled above -->
<path d="M33.6 984.2v8.6l-5.4-4.3z" fill="#B4B4B4"/>
<path d="M56.6 984.2v8.6l5.4-4.3z" fill="#B4B4B4"/>
<rect x="103" y="974" width="79" height="27" fill="#fff"/>
<rect x="103" y="974" width="1" height="27" fill="#ABABAB"/><rect x="181" y="974" width="1" height="27" fill="#ABABAB"/>
<rect x="103" y="997.5" width="79" height="2.5" fill="#217346"/>
<text x="115.5" y="990.8" font-family="Liberation Sans" font-weight="bold" font-size="15.5" fill="#217346">Sheet1</text>
<circle cx="225" cy="988.9" r="9.3" fill="none" stroke="#777" stroke-width="1.4"/>
<path d="M225 983.5v11M219.5 988.9h11" stroke="#666" stroke-width="1.8"/>
<!-- hscroll -->
<rect x="1149.5" y="982" width="2.5" height="2.5" fill="#A8A8A8"/><rect x="1149.5" y="987" width="2.5" height="2.5" fill="#A8A8A8"/><rect x="1149.5" y="992" width="2.5" height="2.5" fill="#A8A8A8"/>
<rect x="1167.5" y="979.5" width="727" height="18" fill="#DADADA" stroke="#C6C6C6"/>
<rect x="1167.5" y="979.5" width="18" height="18" fill="#fff" stroke="#C6C6C6"/>
<rect x="1185.5" y="979.5" width="640" height="18" fill="#fff" stroke="#C6C6C6"/>
<rect x="1876.5" y="979.5" width="18" height="18" fill="#fff" stroke="#C6C6C6"/>
<path d="M1179.5 984v9l-5-4.5z" fill="#666"/>
<path d="M1883 984v9l5-4.5z" fill="#666"/>
<!-- status bar -->
<rect x="0" y="1004" width="1920" height="26" fill="#F1F1F1"/>
<text x="7.5" y="1020.6" font-family="Liberation Sans" font-size="12.5" fill="#444">Ready</text>
<rect x="1578" y="1004" width="41" height="26" fill="#C8C8C8"/>
<g fill="none" stroke="#6A6A6A" stroke-width="1">
<rect x="1591.5" y="1009.5" width="12" height="12"/><path d="M1595.5 1009.5v12M1599.5 1009.5v12M1591.5 1013.5h12M1591.5 1017.5h12"/>
<rect x="1632.5" y="1009.5" width="13" height="12"/><rect x="1635.5" y="1011.5" width="7" height="8"/><path d="M1637 1013.5h4M1637 1015.5h4M1637 1017.5h4"/>
<rect x="1673.5" y="1009.5" width="13" height="12"/><path d="M1677.5 1009.5v7M1681.5 1009.5v7M1673.5 1016.5h8"/>
</g>
<rect x="1706" y="1015.5" width="9.5" height="2" fill="#666"/>
<rect x="1719" y="1016" width="125" height="1" fill="#A0A0A0"/>
<rect x="1779" y="1009.5" width="5" height="13.5" fill="#666"/>
<path d="M1854 1010.3v11.8M1848.2 1016.2h11.8" stroke="#666" stroke-width="2"/>
<text x="1876" y="1021" font-family="Liberation Sans" font-size="12.5" fill="#444">100 %</text>
<!-- taskbar -->
<rect x="0" y="1030" width="1920" height="50" fill="#D4D6DB"/>
<rect x="430" y="1030" width="56" height="50" fill="#E6E7EA"/>
<rect x="311" y="1077" width="51" height="3" fill="#0078D7"/>
<rect x="373" y="1077" width="51" height="3" fill="#0078D7"/>
<rect x="430" y="1077" width="61" height="3" fill="#0A7AD8"/>
<rect x="487" y="1030" width="1" height="47" fill="#C2C4C8"/>
<!-- win logo -->
<path d="M20 1047.5l7-1v7.7h-7zM28.5 1046.3l11.6-1.3v9.2h-11.6zM20 1055.3h7v7.6l-7-1zM28.5 1055.3h11.6v9.6l-11.6-1.5z" fill="#000"/>
<!-- search -->
<circle cx="92.7" cy="1051.5" r="6.3" fill="none" stroke="#000" stroke-width="1.3"/>
<path d="M88.2 1056l-8 8.5" stroke="#000" stroke-width="1.4"/>
<!-- cortana -->
<circle cx="149.7" cy="1054.7" r="8.2" fill="none" stroke="#000" stroke-width="2.6"/>
<!-- task view -->
<path d="M200.5 1045v2.8h12.5v-2.8M200.5 1064v-2.8h12.5v2.8" fill="none" stroke="#000" stroke-width="1.2"/>
<rect x="200.5" y="1050" width="12.5" height="9" fill="none" stroke="#000" stroke-width="1.2"/>
<path d="M219 1045v19" stroke="#000" stroke-width="1.2"/>
<rect x="217.5" y="1051.5" width="3" height="3" fill="#000"/>
<!-- coc coc -->
<defs><linearGradient id="cc" x1="0" x2="1"><stop offset="0" stop-color="#93C83E"/><stop offset="1" stop-color="#4DB862"/></linearGradient>
<linearGradient id="fd" x1="0" y1="0" x2="0" y2="1"><stop offset="0" stop-color="#FDDB73"/><stop offset="1" stop-color="#FBC735"/></linearGradient></defs>
<circle cx="274.2" cy="1054.4" r="12.4" fill="#FAFAFA"/>
<circle cx="273.8" cy="1054.7" r="5.3" fill="#fff"/>
<path d="M272.8 1043A11.6 11.6 0 1 0 285.4 1054.2L279 1054.4A5.2 5.2 0 1 1 273.2 1049.4Z" fill="url(#cc)" stroke="#F4F4F4" stroke-width=".6"/>
<circle cx="273.8" cy="1054.7" r="3.5" fill="#6CBF55"/>
<path d="M275.3 1043.8l2.6.3l-2.1 4.9l-1-.3z" fill="#EA5A2E"/>
<path d="M281.3 1043.2l3.2.2l-6.7 7.2l-.9-.6z" fill="#4DB862"/>
<path d="M283.3 1049.3l.6 1.6l-4.3 1.7l-.4-1z" fill="#EA5A2E"/>
<!-- folder -->
<path d="M322.1 1043.5q0-.6.6-.6h11.3l1.6 2.1h-13.5z" fill="#E0A000"/>
<rect x="322.1" y="1045" width="27" height="19.8" rx=".8" fill="url(#fd)"/>
<rect x="322.1" y="1045" width="13" height="2" fill="#E5A800"/>
<path d="M327 1065.9v-9.7q0-1 1-1h16q1 0 1 1v9.7h-4.8v-6.7h-8.4v6.7z" fill="#3991DC"/>
<!-- chrome -->
<circle cx="397.8" cy="1054.7" r="13.7" fill="#DB4437"/>
<path d="M397.8 1054.7L409.7 1047.8A13.7 13.7 0 0 1 397.8 1068.4z" fill="#FFCD40"/>
<path d="M397.8 1054.7L397.8 1068.4A13.7 13.7 0 0 1 385.9 1047.8z" fill="#0F9D58"/>
<circle cx="397.8" cy="1054.7" r="6.2" fill="#fff"/>
<circle cx="397.8" cy="1054.7" r="4.8" fill="#4285F4"/>
<!-- excel -->
<rect x="461" y="1044" width="12.2" height="21" rx="1" fill="#fff" stroke="#217346" stroke-width="1.3"/>
<g fill="#217346"><rect x="462" y="1047.3" width="3" height="1.8"/><rect x="466.2" y="1047.3" width="3.8" height="1.8"/>
<rect x="462" y="1050.8" width="3" height="1.8"/><rect x="466.2" y="1050.8" width="3.8" height="1.8"/>
<rect x="462" y="1054.3" width="3" height="1.8"/><rect x="466.2" y="1054.3" width="3.8" height="1.8"/>
<rect x="462" y="1057.7" width="3" height="1.8"/><rect x="466.2" y="1057.7" width="3.8" height="1.8"/>
<rect x="462" y="1061" width="3" height="1.8"/><rect x="466.2" y="1061" width="3.8" height="1.8"/></g>
<g fill="#7DB095"><rect x="462" y="1049.1" width="3" height="1.7"/><rect x="466.2" y="1049.1" width="3.8" height="1.7"/>
<rect x="462" y="1052.6" width="3" height="1.7"/><rect x="466.2" y="1052.6" width="3.8" height="1.7"/>
<rect x="462" y="1056.1" width="3" height="1.6"/><rect x="466.2" y="1056.1" width="3.8" height="1.6"/>
<rect x="462" y="1059.5" width="3" height="1.5"/><rect x="466.2" y="1059.5" width="3.8" height="1.5"/></g>
<path d="M446.2 1044.2L461.8 1041V1068.2L446.2 1065z" fill="#217346"/>
<path d="M450 1049h2.8l1.4 3.2l1.5-3.2h2.6l-2.7 5.5l2.8 5.5h-2.8l-1.5-3.3l-1.5 3.3h-2.7l2.8-5.5z" fill="#fff"/>
<!-- tray -->
<defs><radialGradient id="sun" cx="35%" cy="30%" r="70%"><stop offset="0" stop-color="#FFE45C"/><stop offset="1" stop-color="#FFA51E"/></radialGradient></defs>
<circle cx="1552" cy="1054.8" r="11.7" fill="url(#sun)"/>
<path d="M1596.8 1044.6l8 3v9c0 4-4 6.5-8 8-4-1.5-8-4-8-8v-9z" fill="#15917A"/>
<path d="M1592.8 1054.5l3 3l5-5" fill="none" stroke="#fff" stroke-width="1.6"/>
<path d="M1621 1062a14 14 0 0 1 14-14M1624.5 1062a10.5 10.5 0 0 1 10.5-10.5M1628 1062a7 7 0 0 1 7-7" fill="none" stroke="#333" stroke-width="1"/>
<circle cx="1633.5" cy="1061" r="1.3" fill="#000"/>
<path d="M1647.5 1051v7h3.5l5 4.5v-16l-5 4.5z" fill="none" stroke="#000" stroke-width="1.2"/>
<path d="M1659 1051.5c1 1 1 4 0 5M1662 1049c2 2 2 8 0 10M1665 1046.5c3 3 3 12 0 15" fill="none" stroke="#555" stroke-width="1"/>
<path d="M1686.5 1044.6l9.5 3.2v7c0 5-4.5 8-9.5 9.7c-5-1.7-9.5-4.7-9.5-9.7v-7z" fill="#fff" stroke="#000" stroke-width="1.3"/>
<path d="M1686.5 1045v19M1677.5 1054h18" stroke="#000" stroke-width="1.2"/>
<circle cx="1691.5" cy="1060" r="5" fill="#1E9E3E"/>
<path d="M1689 1060l2 2l3-3.5" fill="none" stroke="#fff" stroke-width="1.3"/>
<rect x="1710.5" y="1049.5" width="15" height="10.5" fill="#000" stroke="#000"/>
<rect x="1726" y="1052" width="1.5" height="5" fill="#000"/>
<path d="M1707 1048v4M1709.5 1048v4M1706.5 1052h3.5v2.5h-3.5z" stroke="#000" stroke-width=".9" fill="none"/>
<rect x="1737.5" y="1045.5" width="19" height="19" fill="#8FB6F0" stroke="#4C79D8" stroke-width="1"/>
<rect x="1739" y="1047" width="16" height="16" fill="#C8DBFA"/>
<path d="M1752 1050c-2-1.5-7-1.5-8 1.5c-1 2 0 3 2 3.3c-2.5.3-3.5 1.5-2.8 3.5c1 2.5 6 2.5 8.8 1" fill="none" stroke="#3A5BC7" stroke-width="1.6"/>
<text x="1807.5" y="1048.7" text-anchor="middle" font-family="Liberation Sans" font-size="14" fill="#000">09:21 AM</text>
<text x="1807.5" y="1071.6" text-anchor="middle" font-family="Liberation Sans" font-size="14" fill="#000">07/10/2021</text>
<path d="M1869 1045.5h19.5v16h-7.5l-2.5 3l-2.5-3h-7z" fill="none" stroke="#000" stroke-width="1.2"/>
<rect x="1914" y="1030" width="1" height="50" fill="#B8BABE"/>
</svg>
<!-- vertical scrollbar -->
<svg class="a" style="left:1895px;top:237px" width="25" height="737" viewBox="1895 237 25 737">
<rect x="1895" y="237" width="25" height="737" fill="#E6E6E6"/>
<rect x="1898.5" y="239.5" width="18" height="18" fill="#fff" stroke="#C6C6C6"/>
<path d="M1903 251h9l-4.5-5z" fill="#777"/>
<rect x="1898.5" y="258.5" width="18" height="697" fill="#DADADA" stroke="#C6C6C6"/>
<rect x="1898.5" y="258.5" width="18" height="665" fill="#fff" stroke="#C6C6C6"/>
<rect x="1898.5" y="956.5" width="18" height="18" fill="#fff" stroke="#C6C6C6"/>
<path d="M1903 963h9l-4.5 5z" fill="#777"/>
</svg>
<!-- paste options -->
<svg class="a" style="left:1219px;top:751px" width="75" height="28" viewBox="1219 751 75 28">
<rect x="1219.5" y="751.5" width="73" height="26" fill="#fff" stroke="#A6A6A6"/>
<rect x="1224.5" y="757.5" width="15" height="16" fill="#FFE97F" stroke="#8A8A8A" stroke-width="1"/>
<path d="M1225.5 760h13M1225.5 762.5h13M1225.5 765h13M1225.5 767.5h13M1225.5 770h13" stroke="#fff" stroke-width="1" stroke-dasharray="1 1"/>
<path d="M1226 759v-2.5h3v-2h5.5v2h3v2.5z" fill="#D2CBC0" stroke="#8A8A8A" stroke-width=".8"/>
<path d="M1229.5 764.5h9.5l2.5 2.5v6.8h-12z" fill="#fff" stroke="#888" stroke-width="1"/>
<path d="M1231.5 767.5h4M1231.5 770.5h8" stroke="#777" stroke-width=".9"/>
<text x="1246" y="769.8" font-family="Liberation Sans" font-size="14.5" fill="#444">(Ctrl)</text>
<path d="M1282 762h7l-3.5 4z" fill="#444"/>
</svg>
</body></html>
